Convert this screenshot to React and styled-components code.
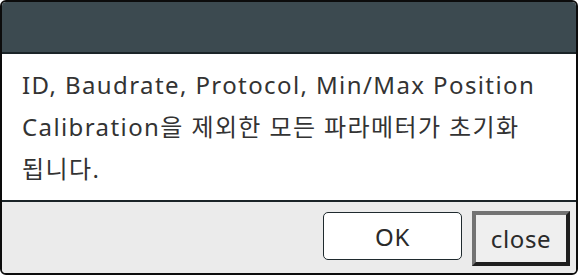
import React from "react";
import styled, { createGlobalStyle } from "styled-components";

const GlobalStyle = createGlobalStyle`
  html, body {
    margin: 0;
    padding: 0;
    background: #ffffff;
  }
`;

const Frame = styled.div`
  position: relative;
  box-sizing: border-box;
  width: 578px;
  height: 275px;
  border: 2px solid #0c0c0c;
  border-radius: 6px;
  overflow: hidden;
  display: flex;
  flex-direction: column;
  font-family: "Noto Sans", "Noto Sans CJK KR", sans-serif;

  &::before {
    content: "";
    position: absolute;
    top: -2px;
    left: 11px;
    width: 176px;
    height: 2px;
    background: #3c4a50;
  }
`;

const TitleBar = styled.div`
  height: 50px;
  flex: none;
  background: #3c4a50;
  border-bottom: 2px solid #1b2428;
`;

const Body = styled.div`
  flex: 1;
  background: #ffffff;
  padding: 10px 14px 0 20px;
  color: #333333;
  font-size: 24px;
  letter-spacing: 1.4px;
  line-height: 42px;
  word-break: keep-all;
  border-bottom: 2px solid #1b2428;
`;

const Footer = styled.div`
  height: 71px;
  flex: none;
  box-sizing: border-box;
  background: #ebebeb;
  display: flex;
  justify-content: flex-end;
  align-items: flex-start;
  gap: 10px;
  padding: 9px 6px 0 0;
`;

const Button = styled.button`
  box-sizing: border-box;
  font-family: "Noto Sans", "Noto Sans CJK KR", sans-serif;
  font-size: 24px;
  letter-spacing: 0.6px;
  color: #2a2a2a;
  padding: 0;
  cursor: pointer;
  width: ${(p) => (p.$default ? "98px" : "139px")};
  height: ${(p) => (p.$default ? "55px" : "48px")};
  margin-top: ${(p) => (p.$default ? "0" : "1px")};
  background: ${(p) => (p.$default ? "#efefef" : "#ffffff")};
  border: ${(p) => (p.$default ? "4px solid" : "1.5px solid #1f2a2e")};
  border-color: ${(p) =>
    p.$default ? "#737373 #1f1f1f #1f1f1f #737373" : "#1f2a2e"};
  border-radius: ${(p) => (p.$default ? "0" : "5px")};
`;

export default function App() {
  return (
    <>
      <GlobalStyle />
      <Frame>
        <TitleBar />
        <Body>
          ID, Baudrate, Protocol, Min/Max Position Calibration을 제외한 모든
          파라메터가 초기화 됩니다.
        </Body>
        <Footer>
          <Button>OK</Button>
          <Button $default>close</Button>
        </Footer>
      </Frame>
    </>
  );
}
